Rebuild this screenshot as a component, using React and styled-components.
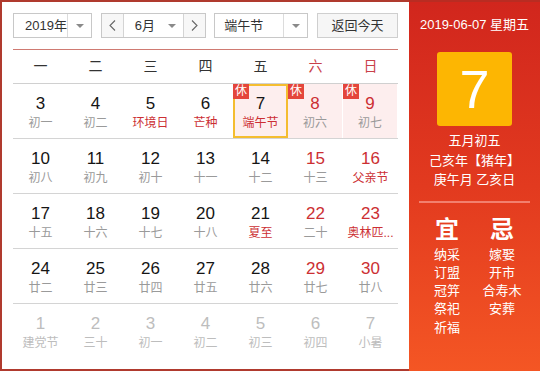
import React from "react";
import styled, { createGlobalStyle } from "styled-components";

const GlobalStyle = createGlobalStyle`
  html, body { margin: 0; padding: 0; background: #fff; }
  body { font-family: "Liberation Sans", "Noto Sans CJK SC", sans-serif; }
  * { box-sizing: border-box; }
`;

const FONT = `"Liberation Sans", "Noto Sans CJK SC", sans-serif`;

const Frame = styled.div`
  display: flex;
  width: 540px;
  height: 371px;
  font-family: ${FONT};
`;

const Main = styled.div`
  width: 409px;
  height: 371px;
  border: 2px solid #b03a2e;
  border-right: none;
  padding: 11px 11px 11px 11px;
  background: #fff;
`;

const Toolbar = styled.div`
  display: flex;
  justify-content: space-between;
  height: 25px;
  width: 385px;
  font-size: 13px;
  color: #333;
`;

const Box = styled.div`
  display: flex;
  width: ${(p) => p.$w}px;
  height: 25px;
  border: 1px solid #c8c8c8;
  background: #fff;
`;

const BoxText = styled.div`
  flex: 1;
  display: flex;
  align-items: center;
  padding-left: ${(p) => p.$pad}px;
  line-height: 23px;
  white-space: nowrap;
`;

const ArrowCell = styled.div`
  width: ${(p) => p.$w || 24}px;
  display: flex;
  align-items: center;
  justify-content: center;
  border-left: ${(p) => (p.$noDivider ? "none" : "1px solid #dcdcdc")};
  &::after {
    content: "";
    border-left: 4px solid transparent;
    border-right: 4px solid transparent;
    border-top: 4px solid #8a8a8a;
  }
`;

const NavBtn = styled.div`
  width: 22px;
  display: flex;
  align-items: center;
  justify-content: center;
  background: #f7f7f7;
  border-left: ${(p) => (p.$side === "right" ? "1px solid #d4d4d4" : "none")};
  border-right: ${(p) => (p.$side === "left" ? "1px solid #d4d4d4" : "none")};
`;

const TodayButton = styled.div`
  width: 81px;
  height: 25px;
  border: 1px solid #cfcfcf;
  background: #f6f6f6;
  text-align: center;
  line-height: 23px;
  color: #333;
`;

const Header = styled.div`
  display: grid;
  grid-template-columns: repeat(7, 55px);
  margin-top: 11px;
  height: 35px;
  border-top: 1px solid #cf7a72;
  border-bottom: 1px solid #d0d0d0;
  width: 385px;
`;

const WeekDay = styled.div`
  text-align: center;
  line-height: 33px;
  font-size: 14px;
  color: ${(p) => (p.$weekend ? "#c9414a" : "#333")};
`;

const Week = styled.div`
  display: grid;
  grid-template-columns: repeat(7, 55px);
  width: 385px;
  height: 55px;
  border-bottom: ${(p) => (p.$last ? "none" : "1px solid #d4d4d4")};
`;

const Cell = styled.div`
  position: relative;
  height: 54px;
  text-align: center;
  padding-top: ${(p) => (p.$selected ? 8 : 10)}px;
  background: ${(p) => (p.$rest ? "#fdeeee" : "transparent")};
  border: ${(p) => (p.$selected ? "2px solid #f4bd30" : "none")};
  margin-right: ${(p) => (p.$rest && !p.$selected ? 1 : 0)}px;
`;

const Badge = styled.span`
  position: absolute;
  top: ${(p) => (p.$selected ? -2 : 0)}px;
  left: ${(p) => (p.$selected ? -2 : 0)}px;
  width: 16px;
  height: 15px;
  background: #e4463b;
  color: #fff;
  font-size: 12px;
  line-height: 15px;
  text-align: center;
`;

const DayNum = styled.div`
  font-size: 17px;
  line-height: 20px;
  color: ${(p) => p.$color};
`;

const Lunar = styled.div`
  font-size: 12px;
  line-height: 18px;
  color: ${(p) => p.$color};
  white-space: nowrap;
`;

const Side = styled.div`
  width: 131px;
  height: 371px;
  border-top: 2px solid #b92c22;
  background: linear-gradient(to bottom, #d1261d 0%, #e23a1f 50%, #f45624 100%);
  color: #fff;
  text-align: center;
  padding-top: 13px;
`;

const DateLine = styled.div`
  font-size: 13px;
  line-height: 20px;
  white-space: nowrap;
`;

const BigDay = styled.div`
  width: 75px;
  height: 74px;
  margin: 17px auto 0;
  background: #fdb602;
  border-radius: 3px;
  font-family: "Liberation Sans", sans-serif;
  font-size: 54px;
  line-height: 74px;
  color: #fff;
`;

const LunarInfo = styled.div`
  margin-top: 5px;
  font-size: 13px;
  line-height: 19.5px;
  white-space: nowrap;
`;

const Divider = styled.div`
  width: 111px;
  height: 2px;
  margin: 11px auto 0;
  background: #f2806e;
`;

const YiJi = styled.div`
  display: grid;
  grid-template-columns: 55px 55px;
  justify-content: center;
  margin-top: ${(p) => p.$mt}px;
`;

const YiJiTitle = styled.div`
  font-size: 24px;
  line-height: 30px;
  font-weight: 600;
`;

const YiJiList = styled.div`
  font-size: 13px;
  line-height: 18.25px;
  white-space: nowrap;
`;

const Chevron = ({ dir }) => (
  <svg width="7" height="11" viewBox="0 0 7 11">
    <polyline
      points={dir === "left" ? "6,0.5 1,5.5 6,10.5" : "1,0.5 6,5.5 1,10.5"}
      fill="none"
      stroke="#666"
      strokeWidth="1.1"
    />
  </svg>
);

const BLACK = "#151515";
const RED = "#cc2f33";
const GRAY = "#9a9a9a";
const FADE = "#bdbdbd";

// [day, lunar, numColor, lunarColor, flags]
const weeks = [
  [
    [3, "初一", BLACK, GRAY],
    [4, "初二", BLACK, GRAY],
    [5, "环境日", BLACK, RED],
    [6, "芒种", BLACK, RED],
    [7, "端午节", BLACK, RED, { rest: true, selected: true }],
    [8, "初六", RED, GRAY, { rest: true }],
    [9, "初七", RED, GRAY, { rest: true }],
  ],
  [
    [10, "初八", BLACK, GRAY],
    [11, "初九", BLACK, GRAY],
    [12, "初十", BLACK, GRAY],
    [13, "十一", BLACK, GRAY],
    [14, "十二", BLACK, GRAY],
    [15, "十三", RED, GRAY],
    [16, "父亲节", RED, RED],
  ],
  [
    [17, "十五", BLACK, GRAY],
    [18, "十六", BLACK, GRAY],
    [19, "十七", BLACK, GRAY],
    [20, "十八", BLACK, GRAY],
    [21, "夏至", BLACK, RED],
    [22, "二十", RED, GRAY],
    [23, "奥林匹...", RED, RED],
  ],
  [
    [24, "廿二", BLACK, GRAY],
    [25, "廿三", BLACK, GRAY],
    [26, "廿四", BLACK, GRAY],
    [27, "廿五", BLACK, GRAY],
    [28, "廿六", BLACK, GRAY],
    [29, "廿七", RED, GRAY],
    [30, "廿八", RED, GRAY],
  ],
  [
    [1, "建党节", FADE, FADE],
    [2, "三十", FADE, FADE],
    [3, "初一", FADE, FADE],
    [4, "初二", FADE, FADE],
    [5, "初三", FADE, FADE],
    [6, "初四", FADE, FADE],
    [7, "小暑", FADE, FADE],
  ],
];

const weekDays = ["一", "二", "三", "四", "五", "六", "日"];

export default function App() {
  return (
    <>
      <GlobalStyle />
      <Frame>
        <Main>
          <Toolbar>
            <Box $w={79}>
              <BoxText $pad={11}>2019年</BoxText>
              <ArrowCell />
            </Box>
            <Box $w={105}>
              <NavBtn $side="left">
                <Chevron dir="left" />
              </NavBtn>
              <BoxText $pad={11}>6月</BoxText>
              <ArrowCell $noDivider $w={22} />
              <NavBtn $side="right">
                <Chevron dir="right" />
              </NavBtn>
            </Box>
            <Box $w={94}>
              <BoxText $pad={9}>端午节</BoxText>
              <ArrowCell />
            </Box>
            <TodayButton>返回今天</TodayButton>
          </Toolbar>

          <Header>
            {weekDays.map((d, i) => (
              <WeekDay key={d} $weekend={i >= 5}>
                {d}
              </WeekDay>
            ))}
          </Header>

          {weeks.map((week, wi) => (
            <Week key={wi} $last={wi === weeks.length - 1}>
              {week.map(([day, lunar, nc, lc, flags = {}], di) => (
                <Cell key={di} $rest={flags.rest} $selected={flags.selected}>
                  {flags.rest && <Badge $selected={flags.selected}>休</Badge>}
                  <DayNum $color={nc}>{day}</DayNum>
                  <Lunar $color={lc}>{lunar}</Lunar>
                </Cell>
              ))}
            </Week>
          ))}
        </Main>

        <Side>
          <DateLine>2019-06-07 星期五</DateLine>
          <BigDay>7</BigDay>
          <LunarInfo>
            <div>五月初五</div>
            <div>己亥年【猪年】</div>
            <div>庚午月 乙亥日</div>
          </LunarInfo>
          <Divider />
          <YiJi $mt={12}>
            <YiJiTitle>宜</YiJiTitle>
            <YiJiTitle>忌</YiJiTitle>
          </YiJi>
          <YiJi $mt={1}>
            <YiJiList>
              <div>纳采</div>
              <div>订盟</div>
              <div>冠笄</div>
              <div>祭祀</div>
              <div>祈福</div>
            </YiJiList>
            <YiJiList>
              <div>嫁娶</div>
              <div>开市</div>
              <div>合寿木</div>
              <div>安葬</div>
            </YiJiList>
          </YiJi>
        </Side>
      </Frame>
    </>
  );
}
